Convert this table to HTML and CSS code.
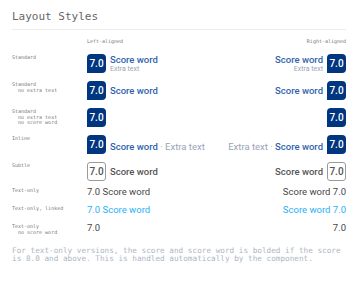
FILE: index.html
```html
<!DOCTYPE html>
<html lang="en">
<head>
<meta charset="utf-8">
<title>Layout Styles</title>
<link rel="stylesheet" href="styles.css">
</head>
<body>
<div class="page">
  <h1 class="title">Layout Styles</h1>
  <div class="row head">
    <span></span>
    <span class="col-head">Left-aligned</span>
    <span class="col-head right-text">Right-aligned</span>
  </div>
  <div class="rows">
    <div class="row">
      <div class="label">Standard</div>
      <div class="cell">
        <div class="score">
          <div class="badge">7.0</div>
          <div class="words"><span class="word">Score word</span><span class="extra">Extra text</span></div>
        </div>
      </div>
      <div class="cell right">
        <div class="score">
          <div class="words"><span class="word">Score word</span><span class="extra">Extra text</span></div>
          <div class="badge">7.0</div>
        </div>
      </div>
    </div>
    <div class="row">
      <div class="label">Standard
  no extra text</div>
      <div class="cell">
        <div class="score">
          <div class="badge">7.0</div>
          <div class="words"><span class="word">Score word</span></div>
        </div>
      </div>
      <div class="cell right">
        <div class="score">
          <div class="words"><span class="word">Score word</span></div>
          <div class="badge">7.0</div>
        </div>
      </div>
    </div>
    <div class="row">
      <div class="label">Standard
  no extra text
  no score word</div>
      <div class="cell">
        <div class="score"><div class="badge">7.0</div></div>
      </div>
      <div class="cell right">
        <div class="score"><div class="badge">7.0</div></div>
      </div>
    </div>
    <div class="row">
      <div class="label">Inline</div>
      <div class="cell">
        <div class="score">
          <div class="badge">7.0</div>
          <div class="inline-words"><span class="word">Score word</span><span class="extra-inline"> · Extra text</span></div>
        </div>
      </div>
      <div class="cell right">
        <div class="score">
          <div class="inline-words"><span class="extra-inline">Extra text · </span><span class="word">Score word</span></div>
          <div class="badge">7.0</div>
        </div>
      </div>
    </div>
    <div class="row subtle-row">
      <div class="label">Subtle</div>
      <div class="cell">
        <div class="score">
          <div class="badge subtle">7.0</div>
          <div class="words"><span class="word subtle-word">Score word</span></div>
        </div>
      </div>
      <div class="cell right">
        <div class="score">
          <div class="words"><span class="word subtle-word">Score word</span></div>
          <div class="badge subtle">7.0</div>
        </div>
      </div>
    </div>
    <div class="row">
      <div class="label">Text-only</div>
      <div class="cell"><span class="textonly">7.0 Score word</span></div>
      <div class="cell right"><span class="textonly">Score word 7.0</span></div>
    </div>
    <div class="row">
      <div class="label">Text-only, linked</div>
      <div class="cell"><a class="textonly linked" href="#">7.0 Score word</a></div>
      <div class="cell right"><a class="textonly linked" href="#">Score word 7.0</a></div>
    </div>
    <div class="row">
      <div class="label">Text-only
  no score word</div>
      <div class="cell"><span class="textonly">7.0</span></div>
      <div class="cell right"><span class="textonly">7.0</span></div>
    </div>
  </div>
  <p class="note">For text-only versions, the score and score word is bolded if the score is 8.0 and above. This is handled automatically by the component.</p>
</div>
</body>
</html>
```

FILE: styles.css
```css
body {
  margin: 0;
  background: #fff;
}

.page {
  padding: 10px 15px 0 12px;
  font-family: Roboto, "Liberation Sans", sans-serif;
}

.title {
  margin: 0;
  font: 400 11px/14px "DejaVu Sans Mono", monospace;
  color: #666;
  padding-bottom: 5px;
  border-bottom: 1px solid #ececec;
}

.row {
  display: grid;
  grid-template-columns: 75px 1fr 1fr;
  align-items: start;
}

.head {
  margin-top: 8px;
  margin-bottom: 10px;
}

.col-head {
  font: 400 5px/6px "DejaVu Sans Mono", monospace;
  color: #777;
}

.right-text {
  text-align: right;
}

.rows {
  display: flex;
  flex-direction: column;
  gap: 8px;
}

.subtle-row {
  margin-bottom: -2px;
}

.label {
  font: 400 5px/5.5px "DejaVu Sans Mono", monospace;
  color: #777;
  white-space: pre;
  padding-top: 1px;
}

.cell {
  display: flex;
}

.cell.right {
  justify-content: flex-end;
}

.score {
  display: flex;
  align-items: center;
  gap: 4px;
}

.badge {
  width: 19px;
  height: 19px;
  box-sizing: border-box;
  background: #003580;
  color: #fff;
  border-radius: 4px 4px 4px 0;
  display: flex;
  align-items: center;
  justify-content: center;
  font: 500 10px/1 Roboto, "Liberation Sans", sans-serif;
}

.badge.subtle {
  background: #fff;
  border: 1px solid #9a9a9a;
  color: #555;
  border-radius: 3px;
}

.words {
  display: flex;
  flex-direction: column;
}

.right .words {
  align-items: flex-end;
}

.word {
  font: 500 9.5px/12px Roboto, "Liberation Sans", sans-serif;
  color: #3163ad;
}

.subtle-word {
  color: #555;
}

.extra {
  font: 400 7px/7px Roboto, "Liberation Sans", sans-serif;
  color: #97a5b8;
}

.inline-words {
  white-space: pre;
}

.extra-inline {
  font: 400 9.5px/12px Roboto, "Liberation Sans", sans-serif;
  color: #97a5b8;
}

.textonly {
  font: 400 9.5px/10px Roboto, "Liberation Sans", sans-serif;
  color: #474747;
  text-decoration: none;
}

.linked {
  color: #2ab0f5;
}

.note {
  margin: 12px 0 0;
  font: 400 7.7px/8px "DejaVu Sans Mono", monospace;
  color: #aeb7c4;
}
```
